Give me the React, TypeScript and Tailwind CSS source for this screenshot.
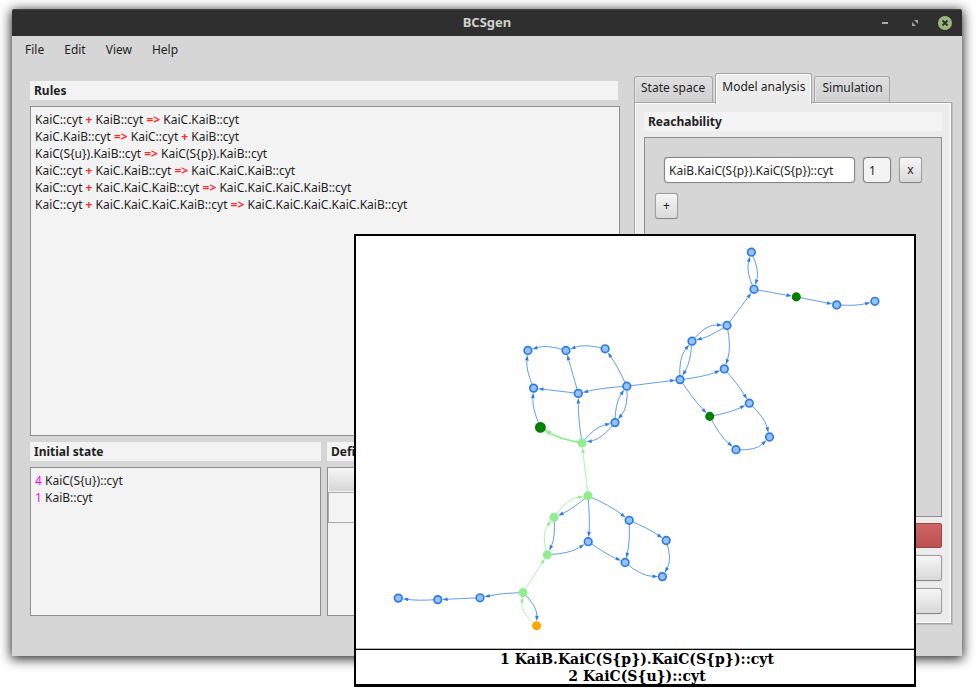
import type { ReactNode } from "react";

type Kind = "state" | "path" | "target" | "goal" | "start";

const nodes: Record<string, [number, number, Kind]> = {
  a1: [527.9, 350.5, "state"],
  a2: [566, 350.5, "state"],
  a3: [605.1, 348.8, "state"],
  b1: [533.6, 388.1, "state"],
  b2: [578.3, 393.4, "state"],
  b3: [626.8, 386.2, "state"],
  c1: [615, 422.6, "state"],
  goal: [540.4, 427.4, "goal"],
  hub: [582, 443, "path"],
  t1: [751.4, 252.2, "state"],
  t2: [754, 289.3, "state"],
  t3: [796.3, 296.9, "target"],
  t4: [836.7, 304.9, "state"],
  t5: [874.9, 301.3, "state"],
  m1: [727, 325.5, "state"],
  m2: [692, 341.2, "state"],
  m3: [680, 379.6, "state"],
  m4: [724.3, 368.9, "state"],
  r1: [709.7, 416.4, "target"],
  r2: [749.3, 403.2, "state"],
  r3: [769.5, 437, "state"],
  r4: [736, 449.7, "state"],
  p1: [588, 495.8, "path"],
  p2: [554, 517.3, "path"],
  p3: [547.3, 554.7, "path"],
  p4: [523, 592.6, "path"],
  start: [536.6, 625.8, "start"],
  q1: [629.2, 520.3, "state"],
  q2: [588.2, 541.7, "state"],
  q3: [625.1, 562.5, "state"],
  q4: [666.2, 540.5, "state"],
  q5: [662.4, 576.6, "state"],
  l1: [480, 597.8, "state"],
  l2: [437.8, 599.6, "state"],
  l3: [398.3, 598.1, "state"],
};

// from, to, sideways bulge at the middle of the edge, colour
const edges: [string, string, number, ("green" | "bold")?][] = [
  ["a3", "a2", -3],
  ["a2", "a1", -3],
  ["b1", "a1", 2.5],
  ["b2", "a2", 0],
  ["b2", "b1", 0],
  ["b3", "b2", -1],
  ["b3", "a3", -1],
  ["hub", "b2", 1],
  ["goal", "b1", 2.5],
  ["hub", "goal", 2, "bold"],
  ["b3", "c1", 4],
  ["c1", "b3", 3],
  ["hub", "c1", 3.5],
  ["c1", "hub", 3.5],
  ["b3", "m3", 0],
  ["m1", "t2", 0],
  ["t2", "t1", 3.5],
  ["t1", "t2", 3.5],
  ["t2", "t3", 0],
  ["t3", "t4", 0],
  ["t4", "t5", -1.5],
  ["m2", "m1", 5],
  ["m1", "m2", 1.5],
  ["m3", "m2", 4],
  ["m2", "m3", 2.5],
  ["m1", "m4", 3],
  ["m3", "m4", -1.5],
  ["m4", "r2", 1],
  ["m3", "r1", -1],
  ["r1", "r2", -1.5],
  ["r2", "r3", 3],
  ["r1", "r4", -2],
  ["r4", "r3", -4],
  ["p1", "hub", 0, "green"],
  ["p1", "p2", 1.5],
  ["p2", "p1", 4.5, "green"],
  ["p3", "p2", 5, "green"],
  ["p2", "p3", 2.5],
  ["p1", "q2", 1],
  ["p3", "q2", -3],
  ["p1", "q1", 1.5],
  ["q1", "q4", 1],
  ["q1", "q3", 1.5],
  ["q2", "q3", -1],
  ["q3", "q5", -3.5],
  ["q4", "q5", 4],
  ["p4", "p3", 0, "green"],
  ["p4", "start", 4],
  ["start", "p4", 5, "green"],
  ["p4", "l1", -1],
  ["l1", "l2", 0],
  ["l2", "l3", 1],
];

function Edge({ from, to, bulge, tone }: { from: string; to: string; bulge: number; tone?: "green" | "bold" }) {
  const [x1, y1] = nodes[from];
  const [x2, y2] = nodes[to];
  const dx = x2 - x1;
  const dy = y2 - y1;
  const len = Math.hypot(dx, dy);
  const cx = (x1 + x2) / 2 + (2 * bulge * dy) / len;
  const cy = (y1 + y2) / 2 - (2 * bulge * dx) / len;
  const angle = Math.atan2(y2 - cy, x2 - cx);
  const ux = Math.cos(angle);
  const uy = Math.sin(angle);
  const tipX = x2 - ux * 4.5;
  const tipY = y2 - uy * 4.5;
  const size = tone === "bold" ? 7 : 5.5;
  const half = tone === "bold" ? 2.8 : 1.8;
  const bx = tipX - ux * size;
  const by = tipY - uy * size;
  const color = tone ? "#90ee90" : "#2b7ce9";
  return (
    <g>
      <path
        d={`M${x1} ${y1}Q${cx} ${cy} ${bx} ${by}`}
        fill="none"
        stroke={color}
        strokeWidth={tone === "bold" ? 1.8 : 0.75}
      />
      <path d={`M${tipX} ${tipY}L${bx - uy * half} ${by + ux * half}L${bx + uy * half} ${by - ux * half}Z`} fill={color} />
    </g>
  );
}

const nodeStyle: Record<Kind, { fill: string; stroke: string; r: number }> = {
  state: { fill: "#97c2fc", stroke: "#2b7ce9", r: 3.8 },
  path: { fill: "#90ee90", stroke: "#90ee90", r: 3.7 },
  target: { fill: "#008000", stroke: "#008000", r: 3.7 },
  goal: { fill: "#008000", stroke: "#008000", r: 4.6 },
  start: { fill: "#ffa500", stroke: "#ffa500", r: 3.7 },
};

function Graph() {
  return (
    <svg viewBox="356 236 558 412" className="block w-full" role="img" aria-label="Reachability graph">
      {edges.map(([from, to, bulge, tone]) => (
        <Edge key={from + to} from={from} to={to} bulge={bulge} tone={tone} />
      ))}
      {Object.entries(nodes).map(([id, [x, y, kind]]) => (
        <circle
          key={id}
          cx={x}
          cy={y}
          r={nodeStyle[kind].r}
          fill={nodeStyle[kind].fill}
          stroke={nodeStyle[kind].stroke}
          strokeWidth={1.7}
        />
      ))}
    </svg>
  );
}

const rules = [
  "KaiC::cyt + KaiB::cyt => KaiC.KaiB::cyt",
  "KaiC.KaiB::cyt => KaiC::cyt + KaiB::cyt",
  "KaiC(S{u}).KaiB::cyt => KaiC(S{p}).KaiB::cyt",
  "KaiC::cyt + KaiC.KaiB::cyt => KaiC.KaiC.KaiB::cyt",
  "KaiC::cyt + KaiC.KaiC.KaiB::cyt => KaiC.KaiC.KaiC.KaiB::cyt",
  "KaiC::cyt + KaiC.KaiC.KaiC.KaiB::cyt => KaiC.KaiC.KaiC.KaiC.KaiB::cyt",
];

const initialState = [
  ["4", "KaiC(S{u})::cyt"],
  ["1", "KaiB::cyt"],
];

function Heading({ id, children }: { id: string; children: ReactNode }) {
  return (
    <h2 id={id} className="h-[19px] bg-[#f3f3f3] px-1 text-[12px] leading-[19px] font-bold">
      {children}
    </h2>
  );
}

function Editor({ labelledBy, className, children }: { labelledBy: string; className: string; children: ReactNode }) {
  return (
    <div
      role="textbox"
      aria-multiline="true"
      aria-labelledby={labelledBy}
      tabIndex={0}
      className={`border border-[#8e8e8e] bg-[#f3f3f3] px-1 py-1 leading-[17px] whitespace-nowrap outline-none ${className}`}
    >
      {children}
    </div>
  );
}

const button =
  "rounded-[3px] border border-[#a0a0a0] border-b-[#858585] bg-linear-to-b from-[#f6f6f6] to-[#d9d9d9] shadow-[0_0_1px_#9a9a9a]";

export default function App() {
  return (
    <div className="relative bg-white pt-[9px] pr-[14px] pb-[43px] pl-3 font-['Noto_Sans',sans-serif] text-[12px] text-[#1f1f1f]">
      <div className="rounded-t-[2px] bg-[#d6d6d6] shadow-[0_2px_12px_1px_rgba(0,0,0,0.85)]">
        <header className="grid h-[27px] grid-cols-[1fr_auto_1fr] items-center rounded-t-[2px] border-t border-[#464646] bg-[#2f2f2f] text-[#d0d0d0]">
          <h1 className="col-start-2 text-[13px] font-bold">BCSgen</h1>
          <div className="flex items-center justify-end gap-4 pr-[10px]">
            <button aria-label="Minimize" className="flex size-[14px] items-center justify-center">
              <svg viewBox="0 0 14 14" className="size-[14px]">
                <path d="M4 6h6v2H4z" fill="#a9a9a9" />
              </svg>
            </button>
            <button aria-label="Maximize" className="flex size-[14px] items-center justify-center">
              <svg viewBox="0 0 14 14" className="size-[14px]">
                <path d="M6 4h4v4zM4 6v4h4z" fill="#a0a0a0" />
              </svg>
            </button>
            <button aria-label="Close" className="size-[14px] rounded-full bg-[#9ab87c]">
              <svg viewBox="0 0 14 14" className="size-[14px]">
                <path d="M4.5 4.5l5 5M9.5 4.5l-5 5" stroke="#2f2f2f" strokeWidth="1.8" />
              </svg>
            </button>
          </div>
        </header>

        <nav className="flex h-[27px] items-center gap-5 px-[13px]">
          <button>File</button>
          <button>Edit</button>
          <button>View</button>
          <button>Help</button>
        </nav>

        <main className="flex gap-[14px] pt-[10px] pr-[10px] pb-8 pl-[18px]">
          <div className="flex min-w-0 flex-1 flex-col gap-[6px] pt-2">
            <section className="flex flex-col gap-[6px]">
              <div className="pr-[2px]">
                <Heading id="rules">Rules</Heading>
              </div>
              <Editor labelledBy="rules" className="h-[330px]">
                {rules.map((rule) => (
                  <p key={rule}>
                    {rule.split(/(\+|=>)/).map((part, i) =>
                      part === "+" || part === "=>" ? (
                        <b key={i} className="text-[#ff2a2a]">
                          {part}
                        </b>
                      ) : (
                        part
                      ),
                    )}
                  </p>
                ))}
              </Editor>
            </section>
            <div className="grid grid-cols-[291fr_293fr] gap-[6px]">
              <section className="flex flex-col gap-[6px]">
                <Heading id="initial">Initial state</Heading>
                <Editor labelledBy="initial" className="h-[149px]">
                  {initialState.map(([count, agent]) => (
                    <p key={agent}>
                      <span className="text-[#ff00ff]">{count}</span> {agent}
                    </p>
                  ))}
                </Editor>
              </section>
              <section className="flex flex-col gap-[6px]">
                <Heading id="definitions">Definitions</Heading>
                <div className="h-[149px] border border-[#8e8e8e] bg-[#f3f3f3]">
                  <table aria-labelledby="definitions" className="w-full border-collapse">
                    <thead>
                      <tr className="h-6 border-b border-[#8e8e8e] bg-linear-to-b from-[#f6f6f6] to-[#d6d6d6]">
                        <th scope="col" />
                        <th scope="col" />
                      </tr>
                    </thead>
                    <tbody>
                      <tr className="h-[30px]">
                        <td className="border border-[#aaaaaa]" />
                        <td className="border border-[#aaaaaa]" />
                      </tr>
                    </tbody>
                  </table>
                </div>
              </section>
            </div>
          </div>

          <div className="w-[318px] shrink-0">
            <div role="tablist" className="flex items-end gap-[2px]">
              <button
                role="tab"
                aria-selected="false"
                className="h-[26px] rounded-t-[3px] border border-b-0 border-[#a6a6a6] bg-linear-to-b from-[#dedede] to-[#d0d0d0] pr-[7px] pb-1 pl-[6px] shadow-[inset_1px_1px_0_#e6e6e6]"
              >
                State space
              </button>
              <button
                role="tab"
                aria-selected="true"
                className="relative -mb-[2px] h-[31px] rounded-t-[3px] border border-b-0 border-[#a6a6a6] bg-[#ececec] px-[6px] pb-1 shadow-[inset_1px_1px_0_#ffffff,inset_-1px_0_0_#ffffff]"
              >
                Model analysis
              </button>
              <button
                role="tab"
                aria-selected="false"
                className="h-[26px] rounded-t-[3px] border border-b-0 border-[#a6a6a6] bg-linear-to-b from-[#dedede] to-[#d0d0d0] pr-[6px] pb-1 pl-[7px] shadow-[inset_1px_1px_0_#e6e6e6]"
              >
                Simulation
              </button>
            </div>
            <section
              role="tabpanel"
              className="flex flex-col gap-[6px] border border-[#a6a6a6] bg-[#ececec] px-[9px] pt-[9px] pb-[9px] shadow-[inset_0_0_0_1px_#ffffff,1px_1px_0_#bdbdbd]"
            >
              <Heading id="reachability">Reachability</Heading>
              <div className="flex h-[380px] flex-col items-start gap-[10px] border border-[#8e8e8e] bg-[#d6d6d6] px-[10px] pt-[19px]">
                <div className="flex w-full gap-2 px-[9px]">
                  <input
                    aria-label="Agent"
                    defaultValue="KaiB.KaiC(S{p}).KaiC(S{p})::cyt"
                    className="h-[26px] min-w-0 flex-1 rounded-[4px] border border-[#858585] bg-white px-1 shadow-[0_0_1px_#858585]"
                  />
                  <input
                    aria-label="Amount"
                    defaultValue="1"
                    className="h-[26px] w-7 rounded-[4px] border border-[#858585] bg-[#f3f3f3] px-[5px] shadow-[0_0_1px_#858585]"
                  />
                  <button className={`h-[26px] w-[23px] ${button}`}>x</button>
                </div>
                <button className={`h-[26px] w-[23px] ${button}`}>+</button>
              </div>
              <div className="flex flex-col gap-[7px]">
                <button
                  aria-label="Stop"
                  className="h-[25px] rounded-[2px] border border-[#9c4444] bg-linear-to-b from-[#d06464] to-[#b85252]"
                />
                <button aria-label="Compute" className={`h-[26px] ${button}`} />
                <button aria-label="Show graph" className={`h-[26px] ${button}`} />
              </div>
            </section>
          </div>
        </main>
      </div>

      <figure className="absolute top-[234px] left-[354px] w-[562px] border-2 border-b-3 border-black bg-white">
        <Graph />
        <div className="h-px bg-[#b5b5b5]" />
        <figcaption className="h-[35px] border-t border-black pt-px pl-1 text-center font-['DejaVu_Serif',serif] text-[14px] leading-[17px] font-bold text-black">
          <p>1 KaiB.KaiC(S{"{p}"}).KaiC(S{"{p}"})::cyt</p>
          <p>2 KaiC(S{"{u}"})::cyt</p>
        </figcaption>
      </figure>
    </div>
  );
}
